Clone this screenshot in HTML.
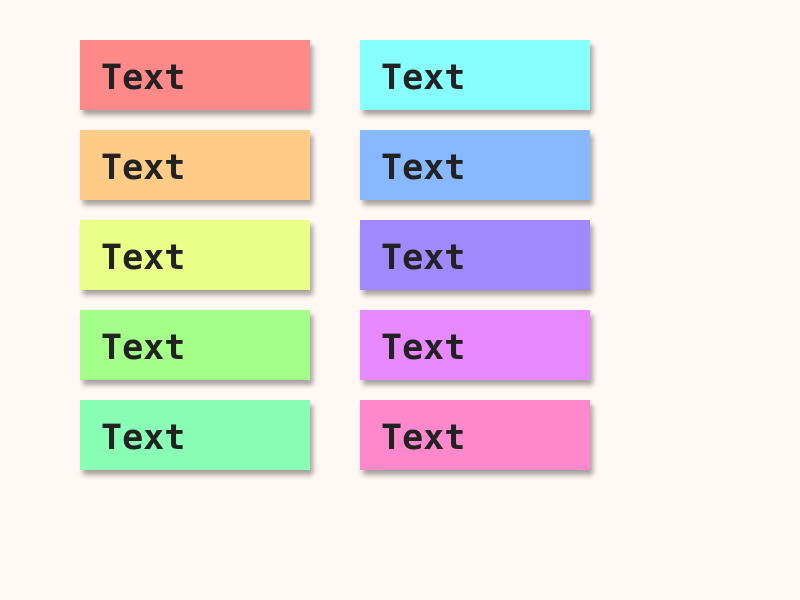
<!DOCTYPE html>
<html><head><style>
body{margin:0;width:800px;height:600px;background:#fff8f4;position:relative;overflow:hidden}
.n{position:absolute;width:230px;height:70px;box-shadow:3px 5px 5px rgba(0,0,0,0.35);font-family:"DejaVu Sans Mono",monospace;font-weight:bold;font-size:35px;color:#222;line-height:76px;padding-left:21px;box-sizing:border-box}
</style></head><body>
<div class="n" style="left:80px;top:40px;background:#ff8888">Text</div>
<div class="n" style="left:80px;top:130px;background:#ffcc88">Text</div>
<div class="n" style="left:80px;top:220px;background:#eaff88">Text</div>
<div class="n" style="left:80px;top:310px;background:#a4ff88">Text</div>
<div class="n" style="left:80px;top:400px;background:#88ffb4">Text</div>
<div class="n" style="left:360px;top:40px;background:#88ffff">Text</div>
<div class="n" style="left:360px;top:130px;background:#88b8ff">Text</div>
<div class="n" style="left:360px;top:220px;background:#a088ff">Text</div>
<div class="n" style="left:360px;top:310px;background:#e888ff">Text</div>
<div class="n" style="left:360px;top:400px;background:#ff88cc">Text</div>
</body></html>
